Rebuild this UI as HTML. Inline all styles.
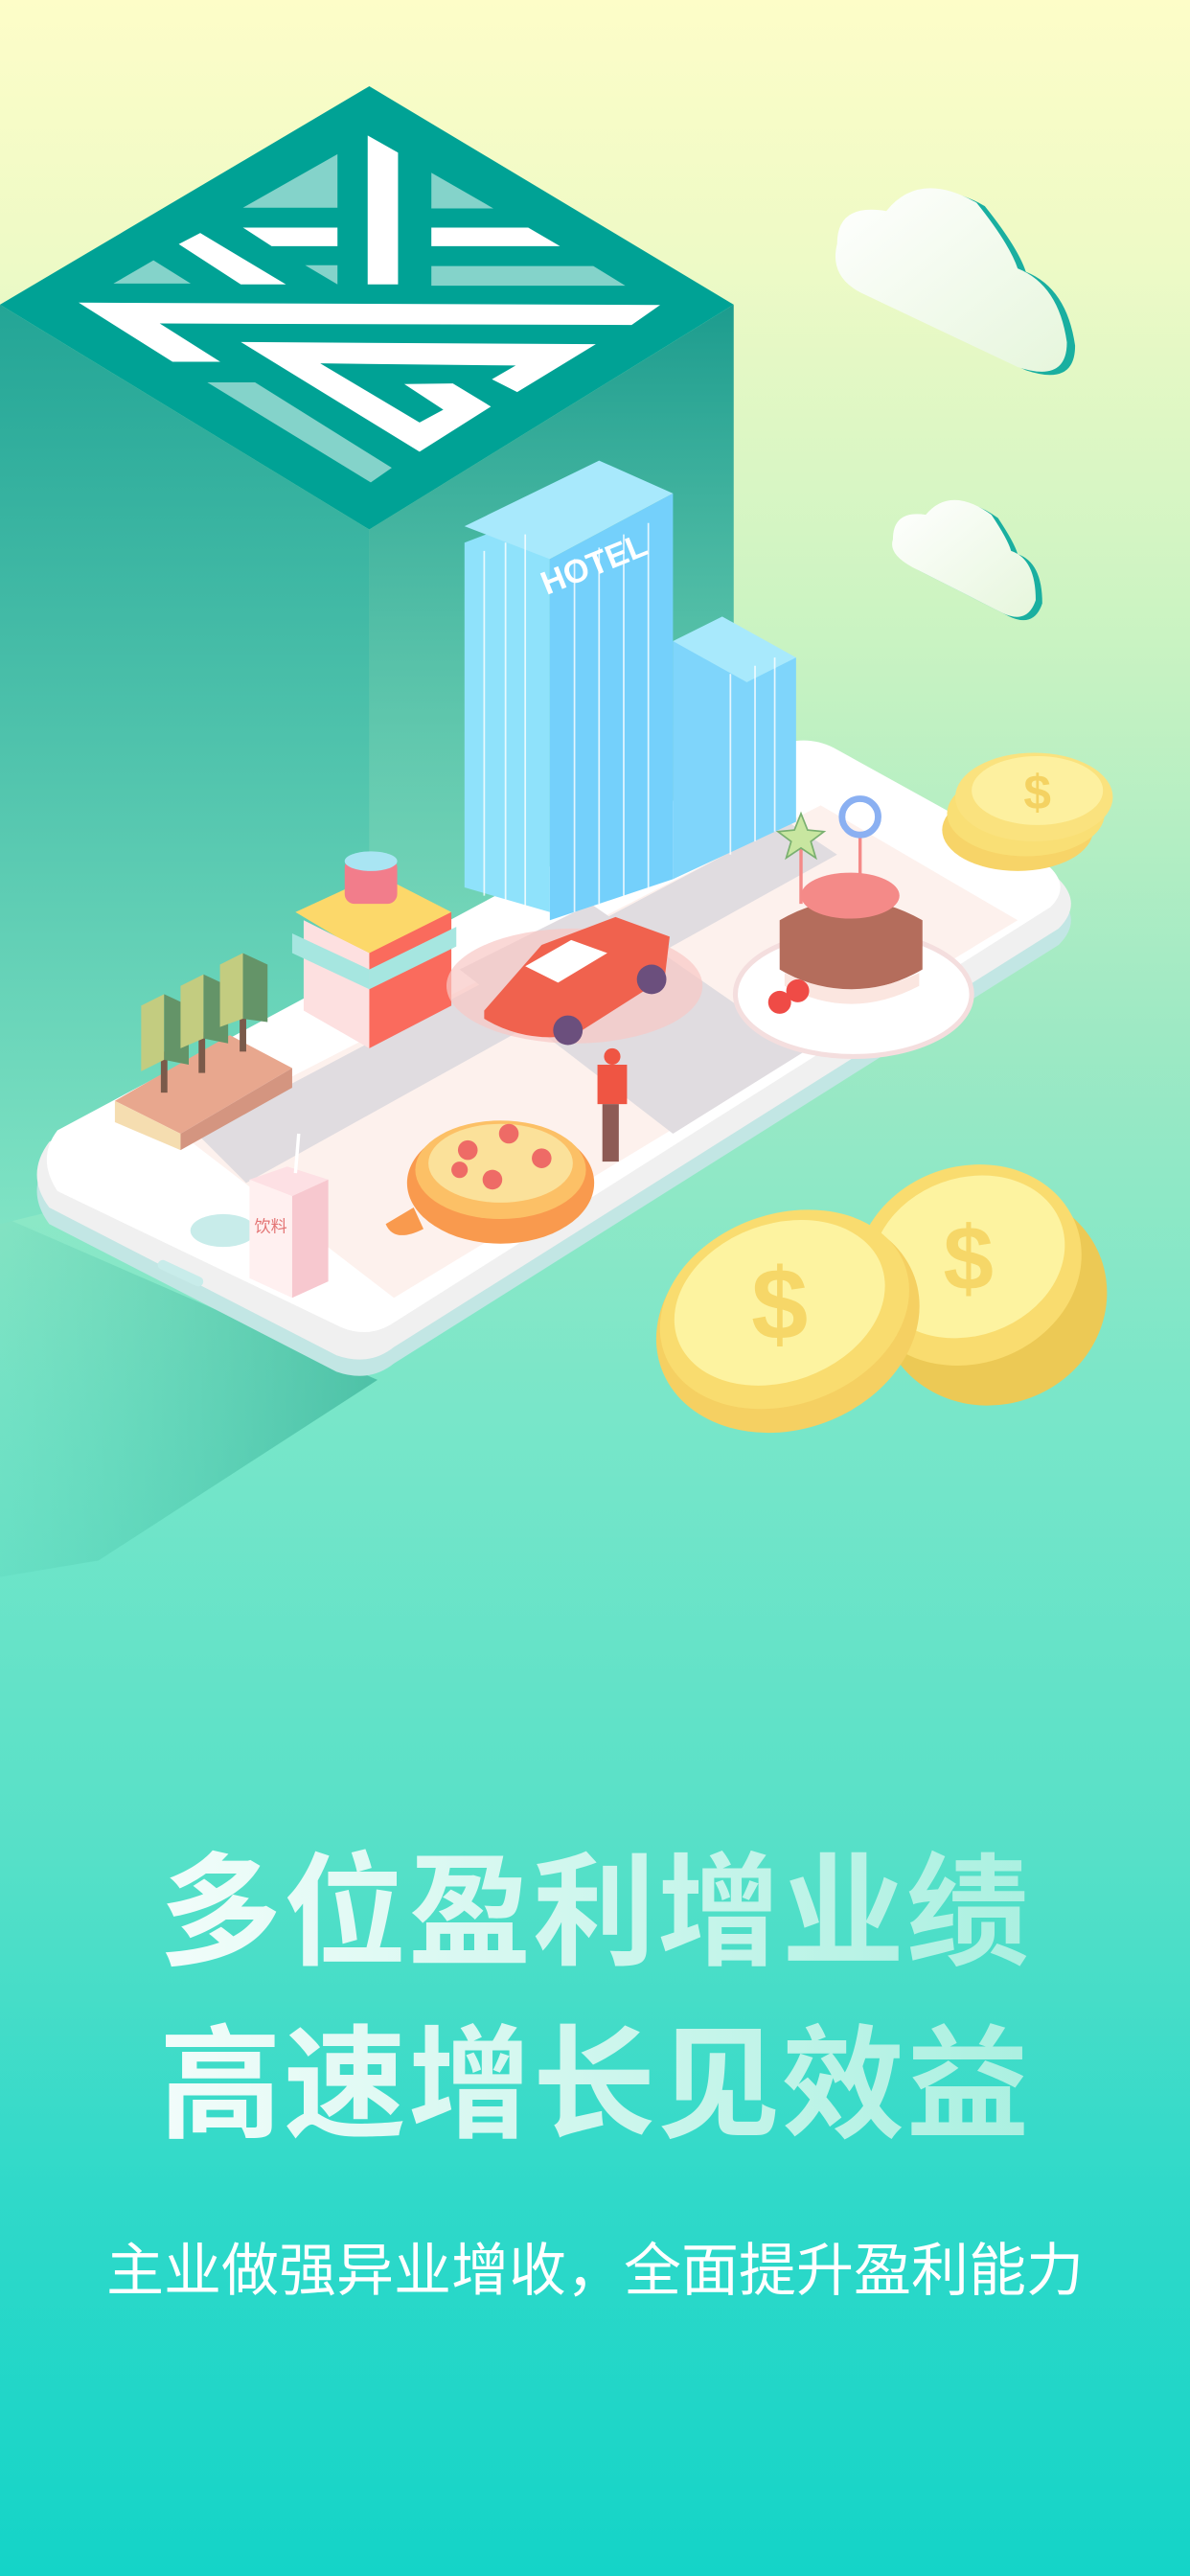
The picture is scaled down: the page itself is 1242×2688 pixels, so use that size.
<!DOCTYPE html>
<html><head><meta charset="utf-8">
<style>
html,body{margin:0;padding:0}
body{width:1242px;height:2688px;overflow:hidden;position:relative;
background:linear-gradient(180deg,#fdfdc8 0%,#eefac6 10%,#c9f3c2 25%,#9ee9c4 40%,#78e6c9 55%,#56e0c8 72%,#30d9c9 85%,#14d4c8 100%);
font-family:"Liberation Sans","Noto Sans CJK SC",sans-serif;}
svg{position:absolute;left:0;top:0}
.t{position:absolute;left:0;width:1242px;text-align:center;white-space:nowrap}
.big{font-size:128px;font-weight:bold;letter-spacing:2px;
background:linear-gradient(90deg,#ffffff 0%,#9eeedc 100%);-webkit-background-clip:text;background-clip:text;color:transparent}
</style></head><body>
<svg width="1242" height="2688" viewBox="0 0 725 1568">
<defs>
<linearGradient id="lf" x1="0" y1="0" x2="0" y2="1"><stop offset="0" stop-color="#23a596"/><stop offset="1" stop-color="#7fe3c4"/></linearGradient>
<linearGradient id="rf" x1="0" y1="0" x2="0" y2="1"><stop offset="0" stop-color="#1c9c8e"/><stop offset="1" stop-color="#70dbc0" stop-opacity=".6"/></linearGradient>
<linearGradient id="sh" x1="0" y1="0" x2="1" y2="0"><stop offset="0" stop-color="#4cc4a8" stop-opacity=".2"/><stop offset="1" stop-color="#2aa48c" stop-opacity=".8"/></linearGradient>
<linearGradient id="cl" x1="0" y1="0" x2="1" y2="1"><stop offset="0" stop-color="#fff"/><stop offset="1" stop-color="#e6f6dc"/></linearGradient>
</defs>
<polygon points="0,740 230,840 60,950 0,960" fill="url(#sh)" opacity=".7"/>
<!-- cube -->
<polygon points="0,185 225,322 225,690 0,745" fill="url(#lf)"/>
<polygon points="225,322 447,185 447,560 225,690" fill="url(#rf)"/>
<polygon points="225,52 447,185 225,322 0,185" fill="#00a295"/>
<g fill="#84d3ca">
<polygon points="148,126 205.6,93.4 205.6,126"/>
<polygon points="262.8,104.7 300.6,126.4 262.8,126.4"/>
<polygon points="69.1,172.2 93.5,158 116.2,172.2"/>
<polygon points="185.9,161 205.6,161 205.6,172.7"/>
<polygon points="262.8,161.5 361.5,161.5 381,173.5 262.8,173.5"/>
<polygon points="126.3,232.4 155.4,232.4 238.7,284.4 225.9,293.3"/>
</g>
<g fill="#fff">
<polygon points="224,82 242.5,92.4 242.5,172.7 224,172.7"/>
<polygon points="148,138.1 205.6,138.1 205.6,149.4 165.5,149.4"/>
<polygon points="262.8,138.1 321.8,138.1 341.2,149.4 262.8,149.4"/>
<polygon points="108.9,148.2 122,141.4 174.2,172.7 146.7,172.7"/>
<polygon points="47.9,183.8 402.2,185.2 384.8,197.4 97.3,196.5 134.2,219.8 105.1,219.8"/>
<polygon points="146.7,207.8 363,209.1 315.1,238.3 299.7,230.5 314.2,222.1 195.1,220.8 255.6,256.8 270.1,249 246.3,233.4 275.9,233 299.1,247.1 255.6,274.6"/>
</g>
<!-- clouds -->
<path d="M515,150 q0,-25 30,-20 q20,-25 55,-5 q20,25 25,40 q25,10 30,45 q0,25 -30,15 l-95,-45 q-20,-10 -15,-30z" fill="#1aafa0"/>
<path d="M510,148 q0,-25 30,-20 q20,-25 55,-5 q20,25 25,40 q25,10 30,45 q0,25 -30,15 l-95,-45 q-20,-10 -15,-30z" fill="url(#cl)"/>
<path d="M548,330 q0,-18 20,-15 q15,-18 40,0 q10,15 12,22 q15,5 15,30 q-5,15 -20,8 l-55,-28 q-15,-8 -12,-17z" fill="#1aafa0"/>
<path d="M544,328 q0,-18 20,-15 q15,-18 40,0 q10,15 12,22 q15,5 15,30 q-5,15 -20,8 l-55,-28 q-15,-8 -12,-17z" fill="url(#cl)"/>
<!-- phone -->
<path d="M30,705 L470,470 Q490,460 510,470 L645,545 Q660,560 645,575 L240,830 Q225,842 205,835 L30,745 Q15,725 30,705z" fill="#c2e6e4"/>
<path d="M30,695 L470,460 Q490,450 510,460 L645,535 Q660,550 645,565 L240,820 Q225,832 205,825 L30,735 Q15,715 30,695z" fill="#f0f0f0"/>
<path d="M35,688 L470,455 Q490,446 508,455 L640,528 Q652,540 640,552 L240,805 Q225,815 208,808 L35,725 Q22,705 35,688z" fill="#fff"/>
<ellipse cx="136" cy="749" rx="20" ry="10" fill="#c8ecea"/>
<rect x="95" y="772" width="30" height="6" rx="3" fill="#c8ecea" transform="rotate(25 110 775)"/>
<polygon points="110,690 500,490 620,560 240,790" fill="#fdf1ed"/>
<polygon points="120,690 480,500 510,520 150,720" fill="#e0dce0"/>
<polygon points="280,590 360,550 490,640 410,690" fill="#e0dce0"/>
<!-- hotel -->
<polygon points="283,330 335,310 335,555 283,540" fill="#8fe2fb"/>
<polygon points="335,340 410,300 410,535 335,560" fill="#74d0fb"/>
<polygon points="410,390 485,400 485,500 410,535" fill="#7fd5fb"/>
<polygon points="283,320 365,280 410,300 335,340" fill="#a8e9fc"/>
<polygon points="410,390 440,375 485,400 455,415" fill="#a8e9fc"/>
<g stroke="#fff" stroke-width="1" opacity=".8"><line x1="295" y1="335" x2="295" y2="545"/><line x1="308" y1="330" x2="308" y2="548"/><line x1="320" y1="325" x2="320" y2="552"/><line x1="350" y1="340" x2="350" y2="555"/><line x1="365" y1="333" x2="365" y2="550"/><line x1="380" y1="325" x2="380" y2="545"/><line x1="395" y1="318" x2="395" y2="540"/><line x1="445" y1="410" x2="445" y2="520"/><line x1="460" y1="405" x2="460" y2="512"/><line x1="472" y1="400" x2="472" y2="506"/></g>
<text x="333" y="362" font-size="20" font-weight="bold" fill="#fff" transform="rotate(-22 333 362)" font-family="Liberation Sans">HOTEL</text>
<!-- shop -->
<polygon points="180,555 230,532 275,555 225,582" fill="#fcd86a"/>
<polygon points="185,560 225,580 225,638 185,615" fill="#fde0e0"/>
<polygon points="225,580 275,555 275,612 225,638" fill="#fa6b5d"/>
<polygon points="178,568 225,590 225,602 178,580" fill="#a6e6e0"/>
<polygon points="225,590 278,564 278,576 225,602" fill="#a6e6e0"/>
<rect x="210" y="522" width="32" height="28" rx="6" fill="#f27d8b"/>
<ellipse cx="226" cy="524" rx="16" ry="6" fill="#a9e5f3"/>
<!-- trees -->
<polygon points="70,670 140,630 178,650 110,690" fill="#e8a78e"/>
<polygon points="70,670 110,690 110,700 70,683" fill="#f5ddb0"/>
<polygon points="110,690 178,650 178,662 110,700" fill="#d49580"/>
<rect x="98" y="640" width="4" height="25" fill="#7a5a4a"/><rect x="121" y="628" width="4" height="25" fill="#7a5a4a"/><rect x="146" y="615" width="4" height="25" fill="#7a5a4a"/>
<polygon points="86,612 100,605 100,645 86,652" fill="#c3cc80"/><polygon points="100,605 115,612 115,648 100,645" fill="#649468"/>
<polygon points="110,600 124,593 124,632 110,638" fill="#c3cc80"/><polygon points="124,593 139,600 139,635 124,632" fill="#649468"/>
<polygon points="134,587 148,580 148,620 134,625" fill="#c3cc80"/><polygon points="148,580 163,587 163,622 148,620" fill="#649468"/>
<!-- car -->
<ellipse cx="350" cy="600" rx="78" ry="35" fill="#f8c7c4" opacity=".7"/>
<path d="M295,615 L330,575 L375,558 L408,570 L405,595 L350,630 Q320,635 295,620z" fill="#f0624e"/>
<polygon points="320,588 348,572 370,580 340,598" fill="#fff"/>
<circle cx="346" cy="627" r="9" fill="#6b4f7d"/><circle cx="397" cy="596" r="9" fill="#6b4f7d"/>
<!-- cake -->
<ellipse cx="520" cy="605" rx="72" ry="38" fill="#fff" stroke="#f4dede" stroke-width="3"/>
<path d="M475,560 Q518,535 562,560 L562,590 Q518,615 475,590z" fill="#b46d5c"/>
<path d="M478,592 Q518,612 560,592 L560,600 Q518,622 478,600z" fill="#fbe6e0"/>
<ellipse cx="518" cy="545" rx="30" ry="14" fill="#f48a88"/>
<line x1="524" y1="508" x2="524" y2="540" stroke="#f48a88" stroke-width="2"/>
<line x1="488" y1="515" x2="488" y2="550" stroke="#f48a88" stroke-width="2"/>
<polygon points="488,495 492,505 502,506 494,512 497,522 488,516 479,522 482,512 474,506 484,505" fill="#c8e6a0" stroke="#7ab070"/>
<circle cx="475" cy="610" r="7" fill="#ef4b46"/><circle cx="486" cy="603" r="7" fill="#ef4b46"/>
<circle cx="524" cy="497" r="11" fill="none" stroke="#8ab0f2" stroke-width="4"/>
<!-- person -->
<rect x="364" y="648" width="18" height="24" fill="#ef5543"/><rect x="367" y="672" width="10" height="35" fill="#8d5b55"/><circle cx="373" cy="643" r="5" fill="#ef5543"/>
<!-- pizza -->
<ellipse cx="305" cy="720" rx="57" ry="37" fill="#f99a4e"/>
<ellipse cx="305" cy="712" rx="52" ry="30" fill="#fcc066"/>
<ellipse cx="305" cy="708" rx="44" ry="24" fill="#fbe19a"/>
<g fill="#ee6b66"><circle cx="285" cy="700" r="6"/><circle cx="310" cy="690" r="6"/><circle cx="330" cy="705" r="6"/><circle cx="300" cy="718" r="6"/><circle cx="280" cy="712" r="5"/></g>
<path d="M252,735 L235,745 Q240,757 258,748z" fill="#f99a4e"/>
<!-- drink -->
<polygon points="152,718 175,710 200,718 178,728" fill="#fde0e4"/>
<polygon points="152,718 178,728 178,790 152,778" fill="#fff0f0"/>
<polygon points="178,728 200,718 200,780 178,790" fill="#f7c8cf"/>
<line x1="180" y1="714" x2="182" y2="690" stroke="#fff" stroke-width="2"/>
<text x="155" y="750" font-size="10" fill="#e37474" font-family="Noto Sans CJK SC">饮料</text>
<!-- coins -->
<g>
<ellipse cx="620" cy="505" rx="46" ry="25" fill="#f7d468"/>
<ellipse cx="625" cy="495" rx="48" ry="26" fill="#f9df75"/>
<ellipse cx="630" cy="485" rx="48" ry="27" fill="#fae27e"/>
<ellipse cx="632" cy="481" rx="40" ry="21" fill="#fdf09f"/>
<text x="632" y="492" text-anchor="middle" font-size="30" font-weight="bold" fill="#f4d262" font-family="Liberation Sans">$</text>
</g>
<g>
<ellipse cx="605" cy="790" rx="70" ry="65" fill="#ecc955" transform="rotate(-20 605 790)"/>
<ellipse cx="590" cy="770" rx="70" ry="60" fill="#f9dc6f" transform="rotate(-20 590 770)"/>
<ellipse cx="590" cy="765" rx="60" ry="48" fill="#fdf3a0" transform="rotate(-20 590 765)"/>
<text x="590" y="785" text-anchor="middle" font-size="55" font-weight="bold" fill="#f6d768" font-family="Liberation Sans">$</text>
<ellipse cx="480" cy="805" rx="82" ry="65" fill="#f5d062" transform="rotate(-20 480 805)"/>
<ellipse cx="478" cy="797" rx="78" ry="58" fill="#f9dc6f" transform="rotate(-20 478 797)"/>
<ellipse cx="475" cy="793" rx="66" ry="48" fill="#fdf3a0" transform="rotate(-20 475 793)"/>
<text x="475" y="815" text-anchor="middle" font-size="62" font-weight="bold" fill="#f6d768" font-family="Liberation Sans">$</text>
</g>
</svg>
<div class="t big" style="top:1922px;line-height:150px">多位盈利增业绩</div>
<div class="t big" style="top:2102px;line-height:150px">高速增长见效益</div>
<div class="t" style="top:2330px;font-size:60px;line-height:80px;color:#fff">主业做强异业增收，全面提升盈利能力</div>
</body></html>
